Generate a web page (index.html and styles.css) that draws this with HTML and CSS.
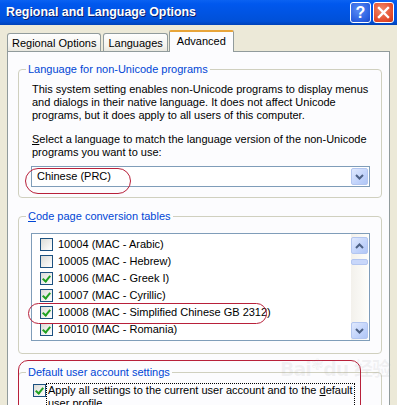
FILE: index.html
```html
<!DOCTYPE html>
<html lang="en">
<head>
    <meta charset="UTF-8">
    <meta name="viewport" content="width=device-width, initial-scale=1.0">
    <title>Regional and Language Options</title>
    <link rel="stylesheet" href="styles.css">
</head>
<body>
    <div class="window">
        <div class="titlebar">
            <span class="title">Regional and Language Options</span>
            <div class="title-buttons">
                <span class="tbtn help">?</span>
                <span class="tbtn close">
                    <svg width="13" height="13" viewBox="0 0 13 13">
                        <path d="M2 2 L11 11 M11 2 L2 11" stroke="#fff" stroke-width="2.4" stroke-linecap="square"/>
                    </svg>
                </span>
            </div>
        </div>

        <div class="tabs">
            <span class="tab">Regional Options</span>
            <span class="tab">Languages</span>
            <span class="tab active">Advanced</span>
        </div>

        <div class="panel">
            <fieldset class="group">
                <legend>Language for non-Unicode programs</legend>
                <p>This system setting enables non-Unicode programs to display menus<br>and dialogs in their native language. It does not affect Unicode<br>programs, but it does apply to all users of this computer.</p>
                <p class="gap"><u>S</u>elect a language to match the language version of the non-Unicode<br>programs you want to use:</p>
                <div class="combo">
                    <span class="combo-text">Chinese (PRC)</span>
                    <span class="sbtn">
                        <svg width="9" height="6" viewBox="0 0 9 6"><path d="M1 1 L4.5 4.5 L8 1" fill="none" stroke="#4d6185" stroke-width="2"/></svg>
                    </span>
                </div>
                <span class="mark mark-combo"></span>
            </fieldset>

            <fieldset class="group codepages">
                <legend><u>C</u>ode page conversion tables</legend>
                <div class="listbox">
                    <ul class="items">
                        <li><span class="check"></span>10004 (MAC - Arabic)</li>
                        <li><span class="check"></span>10005 (MAC - Hebrew)</li>
                        <li><span class="check on"></span>10006 (MAC - Greek I)</li>
                        <li><span class="check on"></span>10007 (MAC - Cyrillic)</li>
                        <li><span class="check on"></span>10008 (MAC - Simplified Chinese GB 2312)</li>
                        <li><span class="check on"></span>10010 (MAC - Romania)</li>
                    </ul>
                    <div class="scrollbar">
                        <span class="sbtn">
                            <svg width="9" height="6" viewBox="0 0 9 6"><path d="M1 5 L4.5 1.5 L8 5" fill="none" stroke="#4d6185" stroke-width="2"/></svg>
                        </span>
                        <span class="thumb"></span>
                        <span class="track"></span>
                        <span class="sbtn">
                            <svg width="9" height="6" viewBox="0 0 9 6"><path d="M1 1 L4.5 4.5 L8 1" fill="none" stroke="#4d6185" stroke-width="2"/></svg>
                        </span>
                    </div>
                </div>
                <span class="mark mark-row"></span>
            </fieldset>

            <fieldset class="group last">
                <legend>Default user account settings</legend>
                <div class="apply">
                    <span class="check on"></span>
                    <span class="apply-text">Apply all settings to the current user account and to the <u>d</u>efault<br>user profile</span>
                </div>
            </fieldset>
            <span class="mark mark-group"></span>
            <span class="watermark">Bai<span class="paw">&#x2743;</span>du 经验</span>
        </div>
    </div>
</body>
</html>
```

FILE: styles.css
```css
* {
    box-sizing: border-box;
    margin: 0;
    padding: 0;
}

body {
    background-color: #ece9d8;
    width: 397px;
    height: 405px;
    overflow: hidden;
    font-family: 'Liberation Sans', Arial, sans-serif;
    font-size: 11px;
    line-height: 13px;
    color: #000;
    white-space: nowrap;
}

.window {
    width: 397px;
}

/* title bar */
.titlebar {
    height: 25px;
    display: flex;
    align-items: center;
    justify-content: space-between;
    padding: 0 3px 0 6px;
    background: linear-gradient(#0a62f2 0%, #0058ee 15%, #0054e3 50%, #0050d8 85%, #0042b8 100%);
}

.title {
    color: #fff;
    font-family: 'Liberation Sans', Arial, sans-serif;
    font-weight: bold;
    font-size: 12.4px;
    text-shadow: 1px 1px 0 #0a1e6e;
}

.title-buttons {
    display: flex;
    gap: 2px;
}

.tbtn {
    width: 21px;
    height: 21px;
    border: 1px solid #fff;
    border-radius: 3px;
    display: flex;
    align-items: center;
    justify-content: center;
    color: #fff;
    font-family: 'Liberation Sans', sans-serif;
    font-weight: bold;
    font-size: 16px;
}

.help {
    background: radial-gradient(circle at 40% 35%, #5a8cf5, #2a5fe0 70%, #1c48c4);
}

.close {
    background: radial-gradient(circle at 40% 35%, #f08a6a, #e2492a 70%, #c6361a);
}

/* tabs */
.tabs {
    height: 26px;
    display: flex;
    align-items: flex-end;
    padding-left: 7px;
    position: relative;
    z-index: 1;
}

.tab {
    height: 18px;
    padding: 1px 4px 0;
    margin-right: 2px;
    border: 1px solid #919b9c;
    border-bottom: none;
    border-radius: 3px 3px 0 0;
    background: linear-gradient(#fefefe, #f4f3ee 70%, #e8e7df);
    display: flex;
    align-items: center;
}

.tab.active {
    height: 22px;
    margin-bottom: -1px;
    margin-left: -1px;
    padding: 0 7px 2px 7px;
    background: #fcfcfe;
    border-top: 2px solid #e8a53a;
    border-radius: 2px 2px 0 0;
}

/* tab panel */
.panel {
    margin-left: 7px;
    width: 383px;
    height: 360px;
    border: 1px solid #919b9c;
    border-bottom: none;
    background: #fcfcfe;
    padding: 11px 7px 0 10px;
    position: relative;
}

.group {
    border: 1px solid #d0d0bf;
    border-radius: 4px;
    padding: 7px 11px 10px 13px;
    position: relative;
}

.group + .group {
    margin-top: 12px;
}

.group.codepages {
    padding-bottom: 12px;
}

.group.last {
    padding-top: 5px;
    padding-bottom: 20px;
}

.group legend {
    color: #0046d5;
    padding: 0 2px;
    margin-left: -6px;
}

.gap {
    margin-top: 11px;
}

/* dropdown */
.combo {
    margin-top: 7px;
    margin-left: -1px;
    height: 21px;
    border: 1px solid #7f9db9;
    background: #fff;
    display: flex;
    align-items: center;
    justify-content: space-between;
    padding: 1px;
}

.combo-text {
    padding-left: 4px;
}

.sbtn {
    width: 17px;
    height: 17px;
    border: 1px solid #b3c6f0;
    border-radius: 2px;
    background: linear-gradient(135deg, #e0e9fd, #c1d3fb 60%, #b0c6f6);
    display: flex;
    align-items: center;
    justify-content: center;
}

/* code page list */
.listbox {
    margin-top: 3px;
    margin-left: -1px;
    height: 108px;
    border: 1px solid #7f9db9;
    background: #fff;
    display: flex;
    padding-right: 1px;
}

.items {
    list-style: none;
    flex: 1;
    padding-top: 2px;
}

.items li {
    height: 17px;
    display: flex;
    align-items: center;
    padding-left: 8px;
    gap: 5px;
}

.check {
    width: 13px;
    height: 13px;
    border: 1px solid #1c5180;
    background: linear-gradient(135deg, #dcdcd7, #fff);
    flex: none;
    position: relative;
}

.check.on::after {
    content: "";
    position: absolute;
    left: 2px;
    top: 1px;
    width: 3px;
    height: 6px;
    border: solid #21a121;
    border-width: 0 2px 2px 0;
    transform: translate(1px, 0) rotate(40deg);
}

.scrollbar {
    width: 17px;
    display: flex;
    flex-direction: column;
    padding: 3px 0 1px;
    background: linear-gradient(90deg, #f3f1ec, #fdfdfa);
}

.scrollbar .thumb {
    height: 6px;
    margin-top: 5px;
    border: 1px solid #b3c6f0;
    border-radius: 2px;
    background: #c8d7fa;
}

.scrollbar .track {
    flex: 1;
}

/* default user account */
.apply {
    display: flex;
    align-items: flex-start;
    margin-left: 1px;
}

.apply-text {
    margin-left: 1px;
    padding: 0 1px;
    outline: 1px dotted #000;
}

/* red annotation marks */
.mark {
    position: absolute;
    border: 1.5px solid #b8203a;
}

.mark-combo {
    left: 6px;
    top: 92px;
    width: 106px;
    height: 26px;
    border-radius: 13px;
}

.mark-row {
    left: 9px;
    top: 80px;
    width: 239px;
    height: 21px;
    border-radius: 11px;
}

.mark-group {
    left: 10px;
    top: 308px;
    width: 343px;
    height: 70px;
    border-radius: 10px;
}

.watermark {
    position: absolute;
    left: 272px;
    top: 306px;
    font-family: 'DejaVu Sans', 'Noto Sans CJK SC', sans-serif;
    font-weight: bold;
    font-size: 19px;
    color: rgba(160, 160, 160, 0.12);
    letter-spacing: -1px;
}

.paw {
    font-size: 16px;
    vertical-align: 6px;
}
```
